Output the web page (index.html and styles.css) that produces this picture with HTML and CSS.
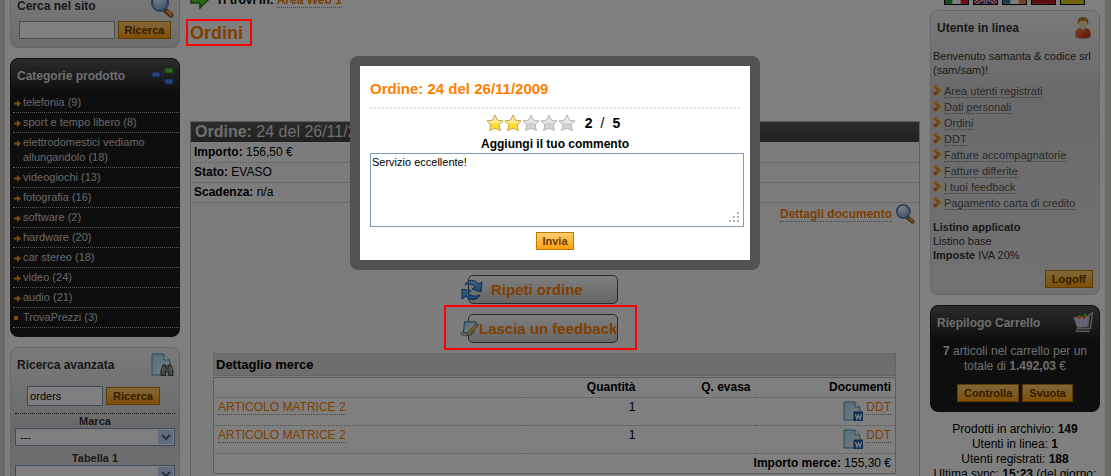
FILE: index.html
```html
<!DOCTYPE html>
<html lang="it">
  <head>
    <meta charset="UTF-8" />
    <meta name="viewport" content="width=device-width, initial-scale=1.0" />
    <title>Ordini</title>
    <link rel="stylesheet" href="styles.css">
  </head>
  <body>
    <!-- simboli riutilizzati -->
    <svg class="defs" width="0" height="0">
      <defs>
        <radialGradient id="lens" cx="40%" cy="30%" r="75%">
          <stop offset="0" stop-color="#e8f4ff" />
          <stop offset="1" stop-color="#6fa8ea" />
        </radialGradient>
        <linearGradient id="gold" x1="0" y1="0" x2="0" y2="1">
          <stop offset="0" stop-color="#fff0c8" />
          <stop offset="0.5" stop-color="#ffe78a" />
          <stop offset="0.6" stop-color="#ffdc1e" />
          <stop offset="1" stop-color="#ffe040" />
        </linearGradient>
        <linearGradient id="silver" x1="0" y1="0" x2="0" y2="1">
          <stop offset="0" stop-color="#eee" />
          <stop offset="0.5" stop-color="#e2e2e2" />
          <stop offset="0.6" stop-color="#ccc" />
          <stop offset="1" stop-color="#dedede" />
        </linearGradient>
        <linearGradient id="paper" x1="0" y1="0" x2="1" y2="1">
          <stop offset="0" stop-color="#a9dcf2" />
          <stop offset="1" stop-color="#f2fbff" />
        </linearGradient>
        <linearGradient id="red" x1="0" y1="0" x2="1" y2="1">
          <stop offset="0" stop-color="#ff8a3a" />
          <stop offset="1" stop-color="#b42a10" />
        </linearGradient>
        <linearGradient id="blue" x1="0" y1="0" x2="0" y2="1">
          <stop offset="0" stop-color="#8cc8f8" />
          <stop offset="1" stop-color="#2f82d8" />
        </linearGradient>
        <symbol id="search" viewBox="0 0 24 24">
          <path d="M15.500 16.500l5.500 4.500" stroke="#7a5230" stroke-width="5" stroke-linecap="round" />
          <path d="M17.500 17.500l3.500 3" stroke="#e8a040" stroke-width="3" stroke-linecap="round" />
          <circle cx="10" cy="9" r="8" fill="url(#lens)" stroke="#5f7fae" stroke-width="2" />
          <path d="M4.500 8a6 6 0 0 1 8-4.500" fill="none" stroke="#fff" stroke-width="1.500" />
        </symbol>
        <symbol id="star" viewBox="0 0 18 18">
          <path d="M9 1l2.500 5.200 5.600.7-4.100 3.900 1.400 5.700L9 14.200l-5.400 2.300L5 10.800.9 6.900l5.600-.7z" stroke-linejoin="round" />
        </symbol>
        <symbol id="word" viewBox="0 0 20 20">
          <path d="M1 1h11l5 5v13H1z" fill="url(#paper)" stroke="#4f93b5" />
          <path d="M12 1v5h5" fill="#fff" stroke="#4f93b5" />
          <rect x="11" y="11" width="9" height="9" fill="#2b67b5" stroke="#1c4f94" />
          <path d="M12.500 13l1.500 5 1.500-4 1.500 4 1.500-5" fill="none" stroke="#fff" stroke-width="1.200" />
        </symbol>
        <symbol id="arrow" viewBox="0 0 7 7">
          <path d="M0 2.500h3V0l4 3.500L3 7V4.500H0z" fill="#f59a10" />
        </symbol>
        <symbol id="bullet" viewBox="0 0 8 11">
          <path d="M2 2.500l4 3-4 3.500" fill="none" stroke="#a86400" stroke-width="2" />
          <circle cx="2.500" cy="2" r="2" fill="#ffa51e" />
          <circle cx="6" cy="5" r="2" fill="#ffa51e" />
          <circle cx="2.200" cy="8.500" r="2" fill="#d88408" />
        </symbol>
      </defs>
    </svg>

    <div class="page">
      <aside class="side">
        <section class="box box-search">
          <header class="box-head">
            <h2>Cerca nel sito</h2>
            <svg class="icon-l" viewBox="0 0 24 24"><use href="#search" /></svg>
          </header>
          <form class="search">
            <input type="text" aria-label="Cerca nel sito" />
            <button type="button" class="btn">Ricerca</button>
          </form>
        </section>

        <section class="box dark categories">
          <header class="box-head">
            <h2>Categorie prodotto</h2>
            <svg class="icon-m" viewBox="0 0 22 18">
              <path d="M8 8h3M11 4v10M11 4h3M11 14h3" stroke="#5468c0" stroke-dasharray="2 1" fill="none" />
              <rect x="0" y="5" width="8" height="5" fill="#4a8ff0" stroke="#1d3e9a" />
              <rect x="13" y="1" width="8" height="5" fill="#62d040" stroke="#2c7a14" />
              <rect x="13" y="12" width="8" height="5" fill="#4a8ff0" stroke="#1d3e9a" />
            </svg>
          </header>
          <ul>
            <li><svg><use href="#arrow" /></svg><a href="#">telefonia (9)</a></li>
            <li><svg><use href="#arrow" /></svg><a href="#">sport e tempo libero (8)</a></li>
            <li><svg><use href="#arrow" /></svg><a href="#">elettrodomestici vediamo allungandolo (18)</a></li>
            <li><svg><use href="#arrow" /></svg><a href="#">videogiochi (13)</a></li>
            <li><svg><use href="#arrow" /></svg><a href="#">fotografia (16)</a></li>
            <li><svg><use href="#arrow" /></svg><a href="#">software (2)</a></li>
            <li><svg><use href="#arrow" /></svg><a href="#">hardware (20)</a></li>
            <li><svg><use href="#arrow" /></svg><a href="#">car stereo (18)</a></li>
            <li><svg><use href="#arrow" /></svg><a href="#">video (24)</a></li>
            <li><svg><use href="#arrow" /></svg><a href="#">audio (21)</a></li>
            <li><svg viewBox="0 0 7 7"><rect y="1" width="4" height="4" fill="#f59a10" /></svg><a href="#">TrovaPrezzi (3)</a></li>
          </ul>
        </section>

        <section class="box advanced">
          <header class="box-head">
            <h2>Ricerca avanzata</h2>
            <svg class="icon-l" viewBox="0 0 24 24">
              <path d="M2 1h12l6 6v15H2z" fill="url(#paper)" stroke="#3f9cc4" />
              <path d="M14 1v6h6" fill="#fff" stroke="#3f9cc4" />
              <path d="M13 12h3v3h2v-3h3l2 6v4.500h-4.500V19h-3v3.500H11V18z" fill="#8a8a8a" stroke="#444" />
              <path d="M13.500 14l-1 4M20.500 14l1 4" stroke="#ddd" />
            </svg>
          </header>
          <form>
            <div class="search">
              <input type="text" value="orders" aria-label="Testo da cercare" />
              <button type="button" class="btn">Ricerca</button>
            </div>
            <div class="filters">
              <label for="marca">Marca</label>
              <select id="marca"><option>---</option></select>
              <label for="tabella">Tabella 1</label>
              <select id="tabella"><option></option></select>
            </div>
          </form>
        </section>
      </aside>

      <main>
        <p class="crumbs">
          <svg viewBox="0 0 20 18"><path d="M1 6h9V1l8 8-8 8v-5H1z" fill="#4fd02c" stroke="#1e7a10" stroke-width="1.500" /></svg>
          <b>Ti trovi in: <a href="#">Area Web 1</a></b>
        </p>
        <h1><span class="marked">Ordini</span></h1>

        <section class="order">
          <h2><b>Ordine:</b> 24 del 26/11/2009</h2>
          <ul class="order-data">
            <li><b>Importo:</b> 156,50 €</li>
            <li><b>Stato:</b> EVASO</li>
            <li><b>Scadenza:</b> n/a</li>
          </ul>
          <p class="details">
            <a href="#">Dettagli documento</a>
            <svg viewBox="0 0 24 24"><use href="#search" /></svg>
          </p>

          <div class="actions">
            <div>
              <button type="button" class="action">
                <svg viewBox="0 0 24 24">
                  <path d="M5 7C8 1 15 1 18 6l4-2-1 10-9-3 3-2c-2-3-6-4-10-2z" fill="url(#blue)" stroke="#1556a8" />
                  <path d="M20 17c-3 6-11 6-14 1l-4 3 0-10 9 2-3 2c2 3 7 4 12 2z" fill="url(#blue)" stroke="#1556a8" />
                </svg>
                Ripeti ordine
              </button>
            </div>
            <div class="marked">
              <button type="button" class="action">
                <svg viewBox="0 0 24 24">
                  <path d="M6 3h14l-3 14H4z" fill="url(#paper)" stroke="#4b8ea8" stroke-width="1.500" />
                  <path d="M1 17h13l1 3H2z" fill="#d4f0fa" stroke="#4b8ea8" />
                  <path d="M8 21l2-5L20 6l3 2-11 11z" fill="#f5b848" stroke="#a87438" />
                  <path d="M19 6l2-2 3 3-2 2z" fill="#8c98a8" />
                </svg>
                Lascia un feedback
              </button>
            </div>
          </div>

          <div class="goods">
            <h3>Dettaglio merce</h3>
            <table>
              <thead>
                <tr><th></th><th>Quantità</th><th>Q. evasa</th><th>Documenti</th></tr>
              </thead>
              <tbody>
                <tr>
                  <td><a href="#">ARTICOLO MATRICE 2</a></td><td>1</td><td></td>
                  <td><svg viewBox="0 0 20 20"><use href="#word" /></svg><a href="#">DDT</a></td>
                </tr>
                <tr>
                  <td><a href="#">ARTICOLO MATRICE 2</a></td><td>1</td><td></td>
                  <td><svg viewBox="0 0 20 20"><use href="#word" /></svg><a href="#">DDT</a></td>
                </tr>
              </tbody>
              <tfoot>
                <tr><td colspan="4"><b>Importo merce:</b> 155,30 €</td></tr>
              </tfoot>
            </table>
          </div>
        </section>
      </main>

      <aside class="side">
        <div class="flags">
          <svg viewBox="0 0 25 16"><path fill="#fff" d="M0 0h25v16H0z" /><path fill="#18a030" d="M0 0h8v16H0z" /><path fill="#e02020" d="M17 0h8v16h-8z" /></svg>
          <svg viewBox="0 0 25 16"><path fill="#203c9c" d="M0 0h25v16H0z" /><path d="M0 0l25 16M25 0L0 16M12.500 0v16M0 8h25" stroke="#fff" stroke-width="4" /><path d="M0 0l25 16M25 0L0 16M12.500 0v16M0 8h25" stroke="#d82030" stroke-width="2" /></svg>
          <svg viewBox="0 0 25 16"><path fill="#fff" d="M0 0h25v16H0z" /><path fill="#3474a8" d="M0 0h8v16H0z" /><path fill="#f08040" d="M17 0h8v16h-8z" /></svg>
          <svg viewBox="0 0 25 16"><path fill="#b81c1c" d="M0 0h25v16H0z" /></svg>
          <svg viewBox="0 0 25 16"><path fill="#e0d010" d="M0 0h25v16H0z" /></svg>
        </div>

        <section class="box user">
          <header class="box-head">
            <h2>Utente in linea</h2>
            <svg class="icon-m" viewBox="0 0 22 24">
              <path d="M3 22c-1-6 0-9 5-10h6c5 1 6 4 5 10-4 2-12 2-16 0z" fill="url(#red)" />
              <path d="M8 12l3 3 3-3z" fill="#7cc4f0" />
              <ellipse cx="11" cy="7.500" rx="4.500" ry="5.500" fill="#f8d8a4" />
              <path d="M5.500 8C4 3 7 0 11 0s7 3 5.500 8C15 7 15 5 14 4 12 5 9 4 8 4 7 5 7 7 5.500 8z" fill="#b08030" />
            </svg>
          </header>
          <div class="user-body">
            <p>Benvenuto samanta &amp; codice srl (sam/sam)!</p>
            <ul>
              <li><svg><use href="#bullet" /></svg><a href="#">Area utenti registrati</a></li>
              <li><svg><use href="#bullet" /></svg><a href="#">Dati personali</a></li>
              <li><svg><use href="#bullet" /></svg><a href="#">Ordini</a></li>
              <li><svg><use href="#bullet" /></svg><a href="#">DDT</a></li>
              <li><svg><use href="#bullet" /></svg><a href="#">Fatture accompagnatorie</a></li>
              <li><svg><use href="#bullet" /></svg><a href="#">Fatture differite</a></li>
              <li><svg><use href="#bullet" /></svg><a href="#">I tuoi feedback</a></li>
              <li><svg><use href="#bullet" /></svg><a href="#">Pagamento carta di credito</a></li>
            </ul>
            <p><b>Listino applicato</b><br />Listino base<br /><b>Imposte</b> IVA 20%</p>
            <div class="logoff"><button type="button" class="btn">Logoff</button></div>
          </div>
        </section>

        <section class="box dark cart">
          <header class="box-head">
            <h2>Riepilogo Carrello</h2>
            <svg class="icon-m" viewBox="0 0 22 24">
              <path d="M17 4l4-3v3l-2 14H5l-1 3h14" fill="none" stroke="#bbb" stroke-width="1.500" />
              <path d="M1 6l17-2-1 12-12 1z" fill="#d8ccf0" stroke="#999" />
              <path d="M7 9v6M11 9v6M15 8v7" stroke="#b0a4d8" />
              <path d="M4 6l3-3 3 2 3-4 4 4z" fill="#4cb82c" />
              <circle cx="7" cy="6" r="2" fill="#f0742c" />
              <circle cx="12" cy="6" r="1.500" fill="#e83838" />
              <circle cx="5" cy="21" r="1.500" fill="#888" />
              <circle cx="17" cy="21" r="1.500" fill="#888" />
            </svg>
          </header>
          <p><b>7</b> articoli nel carrello per un totale di <b>1.492,03</b> €</p>
          <div class="cart-buttons">
            <button type="button" class="btn">Controlla</button>
            <button type="button" class="btn">Svuota</button>
          </div>
        </section>

        <p class="stats">
          Prodotti in archivio: <b>149</b><br />
          Utenti in linea: <b>1</b><br />
          Utenti registrati: <b>188</b><br />
          Ultima sync: <b>15:23</b> (del giorno:
        </p>
      </aside>
    </div>

    <div class="overlay">
      <form class="modal" role="dialog" aria-labelledby="modal-title">
        <h2 id="modal-title">Ordine: 24 del 26/11/2009</h2>
        <div class="rating">
          <svg class="on"><use href="#star" /></svg>
          <svg class="on"><use href="#star" /></svg>
          <svg><use href="#star" /></svg>
          <svg><use href="#star" /></svg>
          <svg><use href="#star" /></svg>
          <span class="score"><b>2</b><span>/</span><b>5</b></span>
        </div>
        <label for="comment">Aggiungi il tuo commento</label>
        <textarea id="comment">Servizio eccellente!</textarea>
        <button type="button" class="btn">Invia</button>
      </form>
    </div>
  </body>
</html>
```
FILE: styles.css
```css
* {
  box-sizing: border-box;
}

html {
  overflow: hidden;
}

body {
  height: 100vh;
  margin: 0;
  overflow: hidden;
  background-color: #d9d6cf;
  color: #000;
  font-family: "Liberation Sans", Arial, sans-serif;
  font-size: 12px;
}

h1,
h2,
h3,
p,
ul {
  margin: 0;
  padding: 0;
  list-style: none;
}

svg {
  flex: none;
}

input,
select,
textarea,
button {
  font-family: inherit;
}

.defs {
  position: absolute;
}

.page {
  display: grid;
  grid-template-columns: 170px 1fr 170px;
  gap: 10px;
  margin: -16px 6px 0 5px;
  padding: 0 5px;
  background-color: #fff;
}

/* riquadri laterali */
.box {
  margin-bottom: 10px;
  border: 1px solid #ccc;
  border-radius: 8px;
  background: linear-gradient(#f4f4f4, #d4d4d4 80px, #e4e4e4);
  color: #333;
  font-size: 11px;
}

.box-head {
  display: flex;
  align-items: center;
  justify-content: space-between;
  height: 34px;
  padding: 0 5px 0 6px;
}

.box-head h2 {
  font-size: 12px;
}

.icon-l {
  width: 24px;
  height: 24px;
}

.icon-m {
  width: 22px;
  height: 22px;
}

.dark {
  border-color: #1c1c1c;
  background: linear-gradient(#585858, #1c1c1c 34px);
  color: #ddd;
}

.btn {
  height: 18px;
  padding: 0 5px;
  border: 1px solid #c07800;
  background: linear-gradient(#ffcf70, #ff9f10);
  color: #6b3c00;
  font-size: 11px;
  font-weight: bold;
  cursor: pointer;
}

.side .btn {
  padding: 0 6px;
}

.search {
  display: flex;
  align-items: center;
  justify-content: center;
  gap: 3px;
}

.search input {
  width: 76px;
  height: 20px;
  padding: 0 2px;
  border: 1px solid #7f9db9;
  font-size: 11px;
}

.box-search {
  height: 64px;
}

.box-search .search input {
  width: 96px;
  height: 18px;
  border-color: #999;
}

.box-search .box-head {
  height: 36px;
  padding-top: 6px;
}

.categories {
  padding-bottom: 8px;
}

.categories ul {
  margin-left: 2px;
}

.categories li {
  display: flex;
  gap: 2px;
  padding: 2px 0;
  border-bottom: 1px dotted #aaa;
  line-height: 15px;
}

.categories li svg {
  width: 7px;
  height: 7px;
  margin: 5px 0 0 1px;
}

.categories a {
  color: #ccc;
  text-decoration: none;
}

.advanced .search {
  margin: 4px 3px 0 0;
}

.filters {
  display: flex;
  flex-direction: column;
  margin: 7px 4px 0;
  border-top: 1px dotted #000;
  text-align: center;
}

.filters label {
  font-weight: bold;
  line-height: 14px;
}

.filters select {
  height: 18px;
  margin-bottom: 5px;
  padding: 0 4px;
  appearance: none;
  border: 1px solid #7f9db9;
  border-radius: 0;
  background: #fff url("data:image/svg+xml,%3Csvg xmlns='http://www.w3.org/2000/svg' width='16' height='14'%3E%3Crect width='15' height='14' rx='1' fill='%23c4d4fc'/%3E%3Cpath d='M4 5l4 4 4-4' fill='none' stroke='%234d6185' stroke-width='2'/%3E%3C/svg%3E") no-repeat right 0 center;
  font-size: 11px;
}

/* colonna centrale */
.crumbs {
  display: flex;
  align-items: center;
  gap: 6px;
  height: 32px;
}

.crumbs svg {
  width: 20px;
  height: 18px;
}

main a {
  border-bottom: 1px dotted #888;
  color: #ff8000;
  text-decoration: none;
}

h1 {
  height: 105px;
  color: #ff8000;
  font-size: 18px;
  line-height: 34px;
}

.marked {
  position: relative;
}

/* cornice rossa sopra lo sfondo scuro */
.marked::after {
  content: "";
  position: absolute;
  z-index: 20;
  inset: -4px -9px -3px -4px;
  border: 2px solid #f00;
  pointer-events: none;
}

.order {
  min-height: 380px;
  border: 1px solid #bbb;
  background-color: #f8f8f8;
}

.order > h2 {
  height: 20px;
  padding-left: 4px;
  background: linear-gradient(#585858, #444);
  color: #ddd;
  font-size: 16px;
  font-weight: normal;
  line-height: 20px;
}

.order-data {
  padding: 1px 0 0 1px;
}

.order-data li {
  height: 20px;
  padding-left: 2px;
  border-bottom: 1px dotted #bbb;
  line-height: 19px;
}

.details {
  display: flex;
  align-items: center;
  justify-content: flex-end;
  gap: 3px;
  height: 22px;
  padding-right: 4px;
  font-weight: bold;
}

.details svg {
  width: 20px;
  height: 20px;
}

.actions {
  display: flex;
  flex-direction: column;
  align-items: center;
  gap: 10px;
  padding: 50px 24px 10px 0;
}

.action {
  display: flex;
  align-items: center;
  width: 150px;
  height: 29px;
  padding: 0;
  border: 1px solid #555;
  border-radius: 5px;
  background: linear-gradient(#fff, #ccc);
  color: #ff8000;
  font-size: 15px;
  font-weight: bold;
  white-space: nowrap;
  gap: 7px;
}

.action svg {
  width: 24px;
  height: 24px;
  margin-left: -9px;
}

.actions .marked .action {
  gap: 0;
}

.actions .marked .action svg {
  width: 19px;
}

.actions .marked::after {
  inset: -9px -19px -7px -24px;
}

.goods {
  margin: 0 23px 0 22px;
}

.goods h3 {
  height: 23px;
  padding-left: 2px;
  border: 1px solid #ccc;
  background-color: #dcdcdc;
  font-size: 13px;
  line-height: 21px;
}

.goods table {
  width: 100%;
  margin-top: 1px;
  border: 1px solid #bbb;
  border-collapse: collapse;
  background-color: #fff;
}

.goods th,
.goods td {
  height: 20px;
  padding: 0 4px;
  border-bottom: 1px dotted #aaa;
  line-height: 18px;
  text-align: right;
  vertical-align: top;
}

.goods tbody td {
  height: 28px;
}

.goods th:nth-child(2) {
  width: 115px;
}

.goods th:nth-child(3) {
  width: 115px;
}

.goods th:nth-child(4) {
  width: 141px;
}

.goods td:first-child:not([colspan]) {
  text-align: left;
}

.goods td svg {
  width: 20px;
  height: 20px;
  margin: 3px 3px 0 0;
  vertical-align: top;
}

/* colonna destra */
.flags {
  display: flex;
  justify-content: center;
  gap: 4px;
  margin: 4px 2px 5px 0;
}

.flags svg {
  width: 25px;
  height: 17px;
  border: 1px solid #000;
}

.user-body {
  padding: 4px 6px 6px 2px;
  line-height: 14px;
}

.user ul {
  padding: 7px 0 8px;
}

.user li {
  display: flex;
  gap: 3px;
  height: 16px;
}

.user li svg {
  width: 8px;
  height: 11px;
  margin-top: 1px;
}

.user li a {
  height: 14px;
  border-bottom: 1px dotted #777;
  color: #555;
  text-decoration: none;
}

.logoff {
  display: flex;
  justify-content: flex-end;
  margin-top: 8px;
}

.cart {
  padding-bottom: 9px;
  font-size: 12px;
  line-height: 15px;
  text-align: center;
}

.cart p {
  padding: 4px 6px 0;
}

.cart-buttons {
  display: flex;
  justify-content: center;
  gap: 3px;
  margin-top: 10px;
}

.stats {
  line-height: 15px;
  text-align: center;
  white-space: nowrap;
}

/* finestra feedback */
.overlay {
  position: fixed;
  z-index: 10;
  inset: 0;
  display: flex;
  align-items: flex-start;
  justify-content: center;
  padding: 56px 1px 0 0;
  background-color: rgba(0, 0, 0, 0.5);
}

.modal {
  display: flex;
  flex-direction: column;
  align-items: center;
  width: 410px;
  padding: 10px;
  border: 10px solid #525252;
  border-radius: 8px;
  background-color: #fff;
  background-clip: padding-box;
}

.modal h2 {
  width: 100%;
  height: 33px;
  border-bottom: 2px dotted #ddd;
  color: #ff8000;
  font-size: 15px;
  line-height: 26px;
}

.rating {
  display: flex;
  align-items: center;
  height: 28px;
  margin-right: 4px;
}

.rating svg {
  width: 18px;
  height: 18px;
  fill: url(#silver);
  stroke: #b4b4b4;
}

.rating .on {
  fill: url(#gold);
  stroke: #c9a23c;
}

.score {
  display: flex;
  gap: 8px;
  margin-left: 9px;
  font-size: 14px;
}

.modal label {
  font-weight: bold;
  line-height: 14px;
  margin-bottom: 2px;
}

.modal textarea {
  align-self: flex-start;
  width: 374px;
  height: 74px;
  margin-bottom: 5px;
  padding: 2px 1px;
  border: 1px solid #7f9db9;
  font-size: 11px;
}

.modal textarea::-webkit-resizer {
  background: url("data:image/svg+xml,%3Csvg xmlns='http://www.w3.org/2000/svg' width='15' height='15' fill='%23b8b4a0'%3E%3Cpath d='M9 1h2v2H9zM5 5h2v2H5zM9 5h2v2H9zM1 9h2v2H1zM5 9h2v2H5zM9 9h2v2H9z'/%3E%3C/svg%3E") no-repeat;
}
```
